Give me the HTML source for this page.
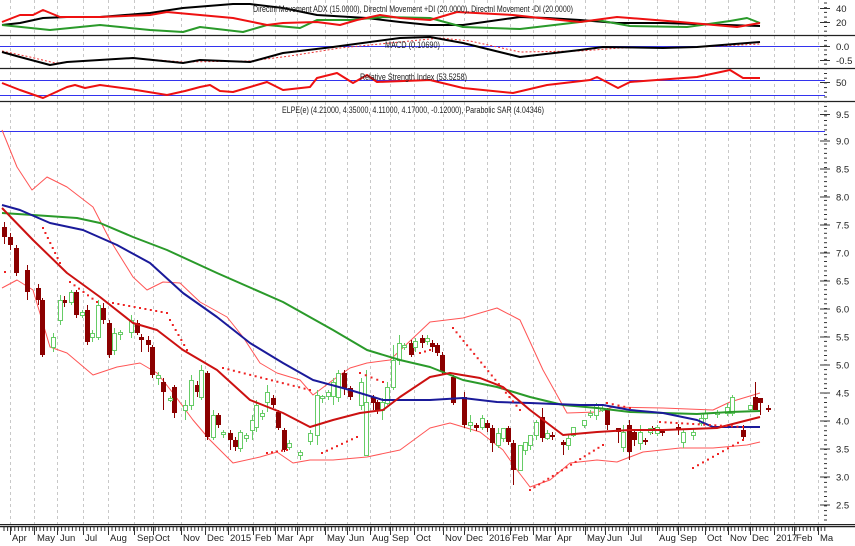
<!DOCTYPE html>
<html><head><meta charset="utf-8"><style>
html,body{margin:0;padding:0;background:#fff;width:855px;height:546px;overflow:hidden}
svg{display:block}
text{font-family:"Liberation Sans",sans-serif;font-size:9.5px;fill:#222}
</style></head><body>
<svg id="s" width="855" height="546" viewBox="0 0 855 546" xmlns="http://www.w3.org/2000/svg">
<g id="grid" stroke="#c8c8c8" stroke-width="1" stroke-dasharray="3,3"></g>
<line x1="0" y1="35.5" x2="855" y2="35.5" stroke="#222" stroke-width="1.3"/>
<line x1="0" y1="68.5" x2="855" y2="68.5" stroke="#222" stroke-width="1.3"/>
<line x1="0" y1="101.5" x2="855" y2="101.5" stroke="#222" stroke-width="1.3"/>
<line x1="0" y1="46.5" x2="825" y2="46.5" stroke="#3333ee"/>
<line x1="0" y1="80.5" x2="825" y2="80.5" stroke="#3333ee"/>
<line x1="0" y1="95.5" x2="825" y2="95.5" stroke="#3333ee"/>
<line x1="0" y1="131.5" x2="825" y2="131.5" stroke="#3333ee"/>
<g id="axis" stroke="#333" stroke-width="1"></g>
<g fill="none" stroke-linejoin="round">
<polyline stroke="#000" stroke-width="2" points="2,25 20,23 43,18 67,17 100,17 150,13 183,8 233,4 250,4 283,8 317,15 367,18 400,22 430,25 463,25 520,17 547,18 580,20 617,23 663,23 760,26"/>
<polyline stroke="#2a9a2a" stroke-width="2" points="2,25 50,30 100,25 150,30 183,32 200,27 243,32 267,25 300,28 317,20 350,20 383,17 430,18 463,27 520,29 580,22 597,20 630,26 687,27 730,21 747,18 760,23"/>
<polyline stroke="#ee1111" stroke-width="2" points="2,22 20,15 33,15 43,10 60,17 100,17 150,15 167,12 200,15 233,18 267,25 283,23 317,22 340,25 357,20 380,15 400,18 430,20 457,12 513,15 540,18 580,22 617,17 680,22 737,27 760,23"/>
<polyline stroke="#ee3333" stroke-width="1" stroke-dasharray="2,2" points="2,51 30,57 55,63 80,61 133,58 183,62 250,61 290,56 340,48 400,42 440,38 470,41 520,52 580,51 620,48 700,47 760,44"/>
<polyline stroke="#000" stroke-width="2" points="2,52 20,57 50,65 67,62 133,58 183,63 200,60 250,62 283,53 333,47 400,38 430,37 463,43 520,57 580,50 603,47 663,48 697,47 760,42"/>
<polyline stroke="#ee1111" stroke-width="2" points="2,83 20,90 43,98 67,87 75,85 85,88 100,85 130,89 167,95 185,91 200,87 210,85 220,91 233,92 267,82 283,90 310,87 317,78 337,73 353,83 367,75 377,82 430,80 463,88 513,93 547,85 590,80 597,77 618,88 630,82 697,77 730,70 743,78 760,78"/>
<polyline stroke="#ff5555" stroke-width="1" points="2,130 17,167 32,190 47,177 67,187 93,207 110,240 133,277 147,290 163,282 180,283 200,302 227,317 243,337 260,363 277,373 300,380 313,395 333,380 350,368 367,363 390,360 430,322 463,318 497,308 520,320 543,370 567,413 597,412 613,407 663,408 713,410 730,402 760,393"/>
<polyline stroke="#ff5555" stroke-width="1" points="2,288 17,280 33,290 50,347 67,353 93,375 117,367 140,363 157,373 173,393 193,420 210,440 233,463 260,457 277,452 293,463 310,460 333,460 367,457 400,450 430,428 450,423 480,432 503,450 517,470 530,487 550,480 570,463 597,460 617,462 643,452 680,448 713,448 747,445 760,442"/>
</g>
<g id="candles"></g>
<g fill="none" stroke-linejoin="round">
<polyline stroke="#2a9a2a" stroke-width="2" points="2,213 33,215 77,218 100,223 133,237 167,250 217,273 283,302 333,330 367,350 400,360 430,367 463,380 497,387 530,397 563,405 597,408 630,412 663,413 697,414 730,412 760,411"/>
<polyline stroke="#1a1a9a" stroke-width="2" points="2,205 20,210 50,223 83,230 117,245 150,263 183,293 217,317 250,343 283,363 313,380 350,390 383,400 430,400 463,398 497,402 530,403 580,405 603,405 630,410 663,413 697,420 713,427 760,427"/>
<polyline stroke="#cc1111" stroke-width="2" points="2,208 33,240 67,273 100,297 133,323 157,330 183,350 217,370 250,400 283,413 310,427 333,420 360,413 383,410 400,397 430,377 450,373 480,378 503,387 530,410 563,435 597,432 630,430 663,430 717,428 760,417"/>
</g>
<g id="dots" fill="#ee2222"></g>
<g id="labels"></g>
<text x="253" y="12" textLength="320" lengthAdjust="spacingAndGlyphs">Directnl Movement ADX (15.0000), Directnl Movement +DI (20.0000), Directnl Movement -DI (20.0000)</text>
<text x="385" y="48" textLength="55" lengthAdjust="spacingAndGlyphs">MACD (0.10690)</text>
<text x="360" y="80" textLength="107" lengthAdjust="spacingAndGlyphs">Relative Strength Index (53.5258)</text>
<text x="282" y="113" textLength="262" lengthAdjust="spacingAndGlyphs">ELPE(e) (4.21000, 4.35000, 4.11000, 4.17000, -0.12000), Parabolic SAR (4.04346)</text>
<line x1="0" y1="524.5" x2="855" y2="524.5" stroke="#222" stroke-width="1"/>
<line x1="0" y1="526.5" x2="855" y2="526.5" stroke="#222" stroke-width="1.5"/>
</svg>
<script>
var NS="http://www.w3.org/2000/svg";
function el(p,t,a){var e=document.createElementNS(NS,t);for(var k in a)e.setAttribute(k,a[k]);p.appendChild(e);return e;}
var g=document.getElementById('grid');
var gx=[10,34,57,83,108,134,153,181,205,228,253,275,297,325,347,370,390,414,443,464,487,510,533,555,585,605,628,657,678,705,728,750,774,794,818];
gx.forEach(function(x){el(g,'line',{x1:x+.5,y1:0,x2:x+.5,y2:524});});
var lab=["Apr","May","Jun","Jul","Aug","Sep","Oct","Nov","Dec","2015","Feb","Mar","Apr","May","Jun","Aug","Sep","Oct","Nov","Dec","2016","Feb","Mar","Apr","May","Jun","Jul","Aug","Sep","Oct","Nov","Dec","2017","Feb","Ma"];
var L=document.getElementById('labels');
var lx=[12,37,60,85,110,137,155,183,207,230,255,277,299,327,349,372,392,416,445,466,489,512,535,557,587,607,630,659,680,707,730,752,776,796,820];
lab.forEach(function(t,i){var e=el(L,'text',{x:lx[i],y:541,'font-size':'9'});e.textContent=t;});
var A=document.getElementById('axis');
for(var x=4;x<825;x+=3.6){el(A,'line',{x1:x,y1:527,x2:x,y2:531});}
gx.forEach(function(x){el(A,'line',{x1:x+.5,y1:527,x2:x+.5,y2:535});});
for(var y=3;y<522;y+=4.7){el(A,'line',{x1:824,y1:y,x2:827,y2:y});}
var rl=[["40",12],["20",26],["0.0",50],["-0.5",64],["50",86],["9.5",118]];
for(var i=0;i<14;i++){rl.push([(9-i*0.5).toFixed(1),144.5+i*28]);}
rl.forEach(function(r){var e=el(L,'text',{x:836,y:r[1],'font-size':'9.5'});e.textContent=r[0];el(A,'line',{x1:820,y1:r[1]-3.5,x2:830,y2:r[1]-3.5});});
var C=document.getElementById('candles');
var dark=[[4,222,227,237,244],[10,233,237,245,250],[16,245,248,273,276],[27,265,270,292,300],[38,284,288,300,305],[42,298,300,355,357],[64,296,300,303,307],[76,290,292,315,318],[87,305,310,342,345],[103,303,308,320,324],[109,320,323,355,358],[137,320,323,333,335],[141,334,337,340,352],[148,336,340,345,352],[152,345,347,375,378],[163,378,382,392,410],[174,385,387,413,418],[197,381,385,392,397],[207,371,373,437,440],[218,413,415,425,428],[230,430,433,440,450],[235,437,440,447,451],[273,395,398,405,408],[278,410,412,428,430],[284,428,430,450,452],[344,370,373,388,395],[350,386,388,397,400],[373,395,397,403,410],[377,400,402,410,414],[411,340,343,355,357],[422,335,338,343,348],
[432,340,343,347,352],[437,343,345,353,356],[442,352,355,372,374],[453,375,377,403,405],[464,392,397,425,428],[476,423,425,428,431],[487,420,423,428,432],[492,425,428,443,452],[508,426,428,442,445],[513,440,443,470,485],[542,408,417,438,442],[552,432,435,437,440],[563,440,442,445,455],[607,408,410,425,430],[618,428,428,432,443],[629,420,425,452,460],[634,430,432,440,446],[645,438,440,442,445],[652,426,428,430,434],[662,430,431,433,436],[678,424,427,428,435],[743,425,430,437,440],[755,382,397,410,410],[760,398,398,403,415],[768,405,408,410,412]];
dark.forEach(function(d){el(C,'line',{x1:d[0]+.5,y1:d[1],x2:d[0]+.5,y2:d[4],stroke:'#8b0000'});el(C,'rect',{x:d[0]-2,y:d[2],width:5,height:Math.max(2,d[3]-d[2]),fill:'#8b0000'});});
var grn=[[53,333,337,347,352],[60,295,300,320,325],[71,290,292,302,305],[82,310,312,315,318],[92,330,333,337,342],[98,300,305,337,340],[114,328,333,350,355],[120,330,332,334,340],[131,315,320,332,338],[158,372,375,378,385],[170,396,398,400,402],[185,400,405,410,420],[191,375,380,405,410],[201,365,370,397,400],[213,410,415,437,440],[223,430,432,434,438],[240,430,432,448,452],[246,433,435,438,442],[252,415,420,430,440],[256,400,405,427,432],[262,410,413,416,420],[267,385,392,402,412],[289,440,443,447,450],[300,450,452,455,460],[310,430,433,441,445],[317,390,395,435,445],[322,395,396,398,403],[328,390,392,396,400],[333,378,382,396,405],[338,370,373,397,402],[361,378,382,405,410],[366,370,402,455,455],[382,398,402,410,420],[387,382,387,403,405],[393,345,360,387,390],[399,335,343,360,365],[404,343,345,347,350],[415,338,341,347,352],[427,335,338,341,345],
[470,415,422,425,432],[482,415,418,427,430],[498,428,433,445,448],[503,428,428,438,442],[520,447,445,470,470],[525,443,442,450,455],[530,440,435,445,450],[536,420,422,435,440],[547,430,433,438,440],[568,435,438,445,450],[573,430,427,435,437],[584,420,420,425,428],[590,410,413,415,418],[596,403,405,415,420],[602,405,408,408,412],[623,425,432,447,452],[640,425,432,443,450],[650,428,428,432,435],[657,425,427,433,436],[683,430,432,442,448],[693,428,432,435,440],[701,415,418,423,426],[705,410,413,418,420],[717,410,412,413,418],[727,403,407,413,416],[732,395,397,413,416],[750,405,405,409,412]];
grn.forEach(function(d){el(C,'line',{x1:d[0]+.5,y1:d[1],x2:d[0]+.5,y2:d[4],stroke:'#66cc66'});el(C,'rect',{x:d[0]-1.5,y:d[2]+.5,width:4,height:Math.max(2,d[3]-d[2]),fill:'#fff',stroke:'#66cc66'});});
var D=document.getElementById('dots');
var segs=[[43,228,60,263],[70,282,97,302],[113,303,167,313],[170,320,187,350],[223,368,310,390],[267,453,287,450],[322,453,357,437],[360,373,383,382],[420,353,430,350],[453,328,520,410],[530,490,603,445],[607,403,630,408],[660,422,743,427],[693,468,743,440],[5,272,5,272]];
segs.forEach(function(s){var dx=s[2]-s[0],dy=s[3]-s[1],n=Math.max(1,Math.round(Math.sqrt(dx*dx+dy*dy)/5.5));for(var i=0;i<=n;i++){el(D,'rect',{x:s[0]+dx*i/n-1,y:s[1]+dy*i/n-1,width:2,height:2});}});
</script>
</body></html>
